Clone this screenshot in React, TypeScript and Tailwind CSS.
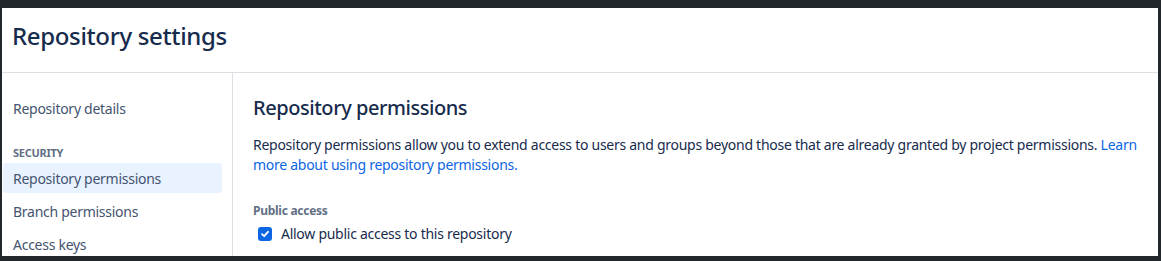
import React from 'react';

const navItems = ['Repository permissions', 'Branch permissions', 'Access keys'];

const App: React.FC = () => {
  return (
    <div className="h-[261px] w-[1161px] overflow-hidden bg-[#22272b] pt-[8px] pb-[5px] pl-[2px] pr-[3px] font-['Noto_Sans',sans-serif] tracking-[-0.27px]">
      <div className="flex h-full flex-col overflow-hidden bg-white text-[#172b4d]">
        <header className="flex h-[65px] shrink-0 items-center border-b border-[#dcdfe4] px-[10px] pb-[9px]">
          <h1 className="text-[24px] font-medium leading-[28px] tracking-[-0.35px]">Repository settings</h1>
        </header>
        <div className="flex min-h-0 flex-1">
          <aside className="w-[231px] shrink-0 border-r border-[#dcdfe4] pt-[23px] pr-[10px] pl-[1px]">
            <div className="flex h-[24px] items-center px-[10px] text-[14px] text-[#44546f]">Repository details</div>
            <div className="mt-[25px] px-[10px] text-[11px] font-bold uppercase leading-[16px] text-[#626f86]">Security</div>
            <ul className="mt-[2px] flex flex-col gap-[3px]">
              {navItems.map((item, i) => (
                <li
                  key={item}
                  className={`flex h-[30px] items-center rounded-[3px] px-[10px] text-[14px] ${
                    i === 0 ? 'bg-[#e9f2ff] text-[#44546f]' : 'text-[#44546f]'
                  }`}
                >
                  {item}
                </li>
              ))}
            </ul>
          </aside>
          <main className="flex-1 pt-[23px] pl-[20px] pr-[11px]">
            <h2 className="text-[20px] font-medium leading-[24px] tracking-[-0.45px]">Repository permissions</h2>
            <p className="mt-[15px] text-[14px] leading-[20px] text-[#172b4d]">
              Repository permissions allow you to extend access to users and groups beyond those that are already granted by
              project permissions.{' '}
              <a className="text-[#0c66e4]" href="#">
                Learn more about using repository permissions.
              </a>
            </p>
            <div className="mt-[28px] text-[12px] font-bold leading-[16px] text-[#626f86]">Public access</div>
            <label className="mt-[5px] flex items-center gap-[9px] pl-[5px] text-[14px] leading-[20px]">
              <span className="flex h-[14px] w-[14px] items-center justify-center rounded-[3px] bg-[#0c66e4]">
                <svg width="10" height="10" viewBox="0 0 10 10" fill="none">
                  <path d="M2 5.2 L4.2 7.2 L8 2.8" stroke="white" strokeWidth="1.8" strokeLinecap="round" strokeLinejoin="round" />
                </svg>
              </span>
              Allow public access to this repository
            </label>
          </main>
        </div>
      </div>
    </div>
  );
};

export default App;
